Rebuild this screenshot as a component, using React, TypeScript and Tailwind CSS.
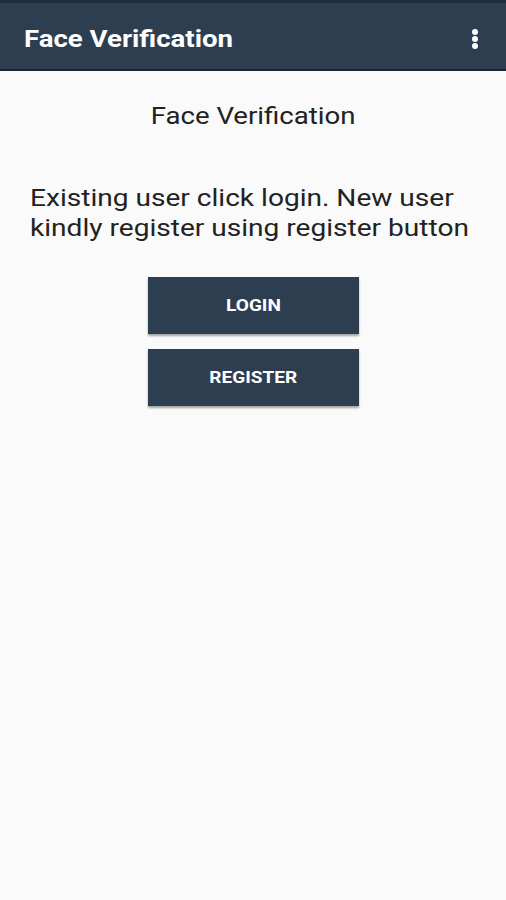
import React from "react";

export default function App() {
  return (
    <div className="w-[506px] h-[900px] overflow-hidden bg-[#fafafa] flex flex-col" style={{ fontFamily: "Roboto, 'Noto Sans', sans-serif" }}>
      <div className="h-[3px] bg-[#1e2b3b]" />
      <div className="h-[68px] bg-[#2e3e51] flex items-center justify-between pl-[24px] pr-[27px] border-b-2 border-[#1a2536]">
        <span className="text-white font-bold text-[24px] mt-[5px] origin-left scale-x-[1.15] inline-block">Face Verification</span>
        <svg width="8" height="22" viewBox="0 0 8 22" className="mt-[5px]">
          <circle cx="4" cy="4" r="3" fill="#fff" />
          <circle cx="4" cy="11" r="3" fill="#fff" />
          <circle cx="4" cy="18" r="3" fill="#fff" />
        </svg>
      </div>
      <div className="flex flex-col items-center">
        <div className="mt-[29px] text-[24px] leading-[32px] text-[#222] scale-x-[1.15]">Face Verification</div>
        <div className="mt-[51px] pl-[30px] self-stretch">
          <div className="w-fit text-[24px] leading-[30px] text-[#222] origin-left scale-x-[1.17]">
            Existing user click login. New user
            <br />
            kindly register using register button
          </div>
        </div>
        <button className="mt-[34px] w-[211px] h-[57px] bg-[#2e3e51] text-white font-bold text-[17px] shadow-[0_2px_2px_rgba(0,0,0,0.35)]">
          <span className="inline-block scale-x-[1.12]">LOGIN</span>
        </button>
        <button className="mt-[15px] w-[211px] h-[57px] bg-[#2e3e51] text-white font-bold text-[17px] shadow-[0_2px_2px_rgba(0,0,0,0.35)]">
          <span className="inline-block scale-x-[1.12]">REGISTER</span>
        </button>
      </div>
    </div>
  );
}
